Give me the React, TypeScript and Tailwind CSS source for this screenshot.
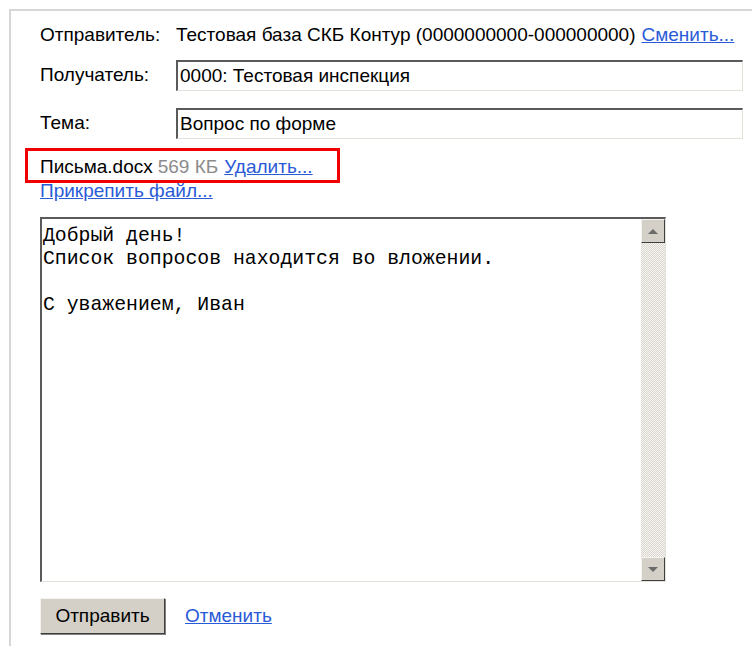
import React from "react";

const sans = { fontFamily: '"Liberation Sans", Arial, sans-serif' };

function Field({ value }: { value: string }) {
  return (
    <div className="h-[31px] flex-1 border-t-2 border-l-2 border-r border-b border-t-[#5a5a5a] border-l-[#5a5a5a] border-r-[#e4e1da] border-b-[#e4e1da] bg-white pl-[2px] text-[19px] leading-[27px] text-black">
      {value}
    </div>
  );
}

function ArrowButton({ up }: { up?: boolean }) {
  return (
    <div className="flex h-[24px] w-[24px] items-center justify-center border border-t-[#f4f3ef] border-l-[#f4f3ef] border-r-[#404040] border-b-[#404040] bg-[#d4d0c8]">
      <svg width="12" height="7" viewBox="0 0 12 7">
        {up ? <polygon points="1,6 11,6 6,1" fill="#6b6b6b" /> : <polygon points="1,1 11,1 6,6" fill="#6b6b6b" />}
      </svg>
    </div>
  );
}

export default function App() {
  return (
    <div className="h-[646px] w-[752px] overflow-hidden bg-white pl-[9px] pt-[9px]" style={sans}>
      <div className="h-full border-l-2 border-t-2 border-[#d6d6d6] pl-[29px] pt-[12px] text-[19px] text-black">
        <div className="flex h-[24px] items-center whitespace-nowrap">
          <span className="w-[136px]">Отправитель:</span>
          <span>Тестовая база СКБ Контур (0000000000-000000000)</span>
          <a className="ml-[6px] text-[#2a5bd7] underline" href="#">Сменить...</a>
        </div>

        <div className="mt-[13px] flex items-center pr-[9px]">
          <span className="w-[136px]">Получатель:</span>
          <Field value="0000: Тестовая инспекция" />
        </div>

        <div className="mt-[17px] flex items-center pr-[9px]">
          <span className="w-[136px]">Тема:</span>
          <Field value="Вопрос по форме" />
        </div>

        <div className="-ml-[15px] mt-[9px] flex h-[35px] w-[315px] items-center border-[3px] border-[#f00000] pl-[12px] pt-[4px] whitespace-nowrap">
          <span>Письма.docx</span>
          <span className="ml-[5px] text-[#8c8c8c]">569 КБ</span>
          <a className="ml-[6px] text-[#2a5bd7] underline" href="#">Удалить...</a>
        </div>
        <div className="-mt-[3px] leading-[22px]">
          <a className="text-[#2a5bd7] underline" href="#">Прикрепить файл...</a>
        </div>

        <div className="mt-[15px] flex h-[365px] w-[626px] border-t-2 border-l-2 border-r border-b border-t-[#5a5a5a] border-l-[#5a5a5a] border-r-[#e4e1da] border-b-[#e4e1da] bg-white">
          <div
            className="flex-1 whitespace-pre pl-[1px] pt-[6px] text-[19.8px] leading-[23px] text-black"
            style={{ fontFamily: '"Liberation Mono", "Courier New", monospace' }}
          >
            {"Добрый день!\nСписок вопросов находится во вложении.\n\nС уважением, Иван"}
          </div>
          <div className="flex w-[24px] flex-col">
            <ArrowButton up />
            <div className="flex-1 bg-[repeating-conic-gradient(#d9d6cf_0%_25%,#f6f5f2_0%_50%)] bg-[length:2px_2px]" />
            <ArrowButton />
          </div>
        </div>

        <div className="mt-[16px] flex items-center">
          <button className="h-[36px] w-[125px] border border-t-[#f4f3ef] border-l-[#f4f3ef] border-r-[#404040] border-b-[#404040] bg-[#d4d0c8] text-[19px] text-black shadow-[1px_1px_0_#808080]">
            Отправить
          </button>
          <a className="ml-[20px] text-[#2a5bd7] underline" href="#">Отменить</a>
        </div>
      </div>
    </div>
  );
}
